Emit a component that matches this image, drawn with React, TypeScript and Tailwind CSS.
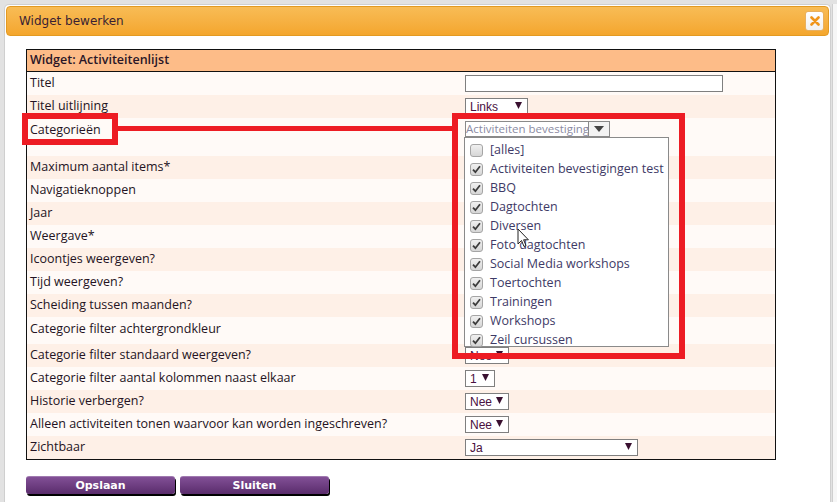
import React from "react";

const labelFont = { fontFamily: '"Open Sans", "DejaVu Sans", sans-serif' };

function Tri({ w, h, color }: { w: number; h: number; color: string }) {
  return (
    <svg width={w} height={h} viewBox={`0 0 ${w} ${h}`}>
      <path d={`M0 0 L${w} 0 L${w / 2} ${h} Z`} fill={color} />
    </svg>
  );
}

function Select({ value, width }: { value: string; width: string }) {
  return (
    <div
      className={`flex h-[17px] items-center justify-between border border-[#7f7f7f] bg-white pl-[4px] pr-[5px] text-[12px] text-[#4a1040] ${width}`}
      style={{ fontFamily: '"Liberation Sans", Arial, sans-serif' }}
    >
      <span className="leading-none">{value}</span>
      <span className="-mt-[3px]">
        <Tri w={7} h={7} color="#3a1030" />
      </span>
    </div>
  );
}

function Check({ checked }: { checked: boolean }) {
  return (
    <div className="flex h-[13px] w-[13px] items-center justify-center rounded-[3px] border border-[#a5a5a5] bg-gradient-to-b from-[#f0f0f0] to-[#d6d6d6]">
      {checked && (
        <svg width="9" height="9" viewBox="0 0 9 9">
          <path d="M1 4.6 L3.4 7.2 L8 1.2" fill="none" stroke="#3c3c3c" strokeWidth="1.8" />
        </svg>
      )}
    </div>
  );
}

type Row = { label: string; h: string; value?: React.ReactNode; top?: boolean };

const rows: Row[] = [
  {
    label: "Titel",
    h: "h-[23px]",
    value: <div className="h-[17px] w-[258px] border border-[#7f7f7f] bg-white" />,
  },
  { label: "Titel uitlijning", h: "h-[23px]", value: <Select value="Links" width="w-[63px]" /> },
  {
    label: "Categorieën",
    h: "h-[38px]",
    top: true,
    value: (
      <div className="mt-[3px] flex h-[16px] w-[145px]">
        <div className="flex min-w-0 flex-1 items-center overflow-hidden whitespace-nowrap border border-[#8a8a8a] bg-white text-[11.5px] leading-none text-[#8b8ba3]" style={labelFont}>
          Activiteiten bevestiging
        </div>
        <div className="flex w-[21px] items-center justify-center border border-l-0 border-[#8a8a8a] bg-[#f3f3f3]">
          <Tri w={10} h={6} color="#444" />
        </div>
      </div>
    ),
  },
  { label: "Maximum aantal items*", h: "h-[23px]" },
  { label: "Navigatieknoppen", h: "h-[23px]" },
  { label: "Jaar", h: "h-[23px]" },
  { label: "Weergave*", h: "h-[23px]" },
  { label: "Icoontjes weergeven?", h: "h-[23px]" },
  { label: "Tijd weergeven?", h: "h-[23px]" },
  { label: "Scheiding tussen maanden?", h: "h-[23px]" },
  { label: "Categorie filter achtergrondkleur", h: "h-[27px]", top: true },
  { label: "Categorie filter standaard weergeven?", h: "h-[23px]", value: <Select value="Nee" width="w-[44px]" /> },
  { label: "Categorie filter aantal kolommen naast elkaar", h: "h-[23px]", value: <Select value="1" width="w-[30px]" /> },
  { label: "Historie verbergen?", h: "h-[23px]", value: <Select value="Nee" width="w-[44px]" /> },
  { label: "Alleen activiteiten tonen waarvoor kan worden ingeschreven?", h: "h-[23px]", value: <Select value="Nee" width="w-[44px]" /> },
  { label: "Zichtbaar", h: "h-[23px]", value: <Select value="Ja" width="w-[173px]" /> },
];

const categories = [
  { name: "[alles]", checked: false },
  { name: "Activiteiten bevestigingen test", checked: true },
  { name: "BBQ", checked: true },
  { name: "Dagtochten", checked: true },
  { name: "Diversen", checked: true },
  { name: "Foto dagtochten", checked: true },
  { name: "Social Media workshops", checked: true },
  { name: "Toertochten", checked: true },
  { name: "Trainingen", checked: true },
  { name: "Workshops", checked: true },
  { name: "Zeil cursussen", checked: true },
];

export default function App() {
  return (
    <div className="relative flex h-[502px] w-[837px] overflow-hidden bg-[#e2e2e2] pl-[4px] pt-[4px]">
      {/* dialoog */}
      <div className="flex w-[827px] flex-col rounded-t-[5px] border border-b-0 border-[#cfcfcf] bg-white p-[1px]">
        <div className="flex h-[30px] items-center justify-between rounded-[4px] border border-[#e39a22] bg-gradient-to-b from-[#f8bc55] to-[#f4a62c] pl-[12px] pr-[4px]">
          <span className="text-[12px] text-[#3a1f33]" style={{ fontFamily: '"DejaVu Sans", sans-serif' }}>
            Widget bewerken
          </span>
          <div className="flex h-[20px] w-[19px] items-center justify-center rounded-[3px] border border-[#e8b060] bg-gradient-to-b from-white to-[#f1f1f1]">
            <svg width="10" height="10" viewBox="0 0 10 10">
              <path d="M1.5 1.5 L8.5 8.5 M8.5 1.5 L1.5 8.5" stroke="#f0951a" strokeWidth="2.6" strokeLinecap="round" />
            </svg>
          </div>
        </div>

        <div className="pl-[20px] pt-[13px]">
          <div className="w-[750px] border border-[#111]" style={labelFont}>
            <div className="flex h-[22px] items-center border-b border-[#111] bg-[#fdbc88] pl-[3px] text-[12.5px] font-semibold text-[#2a1627]">
              Widget: Activiteitenlijst
            </div>
            {rows.map((r, i) => (
              <div
                key={r.label}
                className={`flex ${r.h} ${r.top ? "items-start" : "items-center"} ${i % 2 === 0 ? "bg-[#fffaf7]" : "bg-[#fef0e7]"}`}
              >
                <div className={`w-[438px] pl-[3px] text-[12.5px] font-medium text-[#241323] ${r.top ? "pt-[3px]" : ""}`}>{r.label}</div>
                <div>{r.value}</div>
              </div>
            ))}
          </div>

          <div className="mt-[16px] flex gap-[5px]">
            {["Opslaan", "Sluiten"].map((b) => (
              <button
                key={b}
                className="h-[18px] w-[149px] rounded-[3px] border-t border-[#a07ab0] bg-gradient-to-b from-[#825096] to-[#5a2c6c] text-[11px] font-bold leading-none text-white shadow-[1px_2px_0_#000]"
                style={{ fontFamily: '"DejaVu Sans", Verdana, sans-serif' }}
              >
                {b}
              </button>
            ))}
          </div>
        </div>
      </div>
      <div className="ml-[1px] w-[5px] border-l border-[#cfcfcf] bg-[#f6f6f6]" />

      {/* open keuzelijst categorieën */}
      <div className="absolute left-[464px] top-[137px] h-[210px] w-[205px] border border-[#8a8a8a] bg-white pl-[5px] pt-[3px]" style={labelFont}>
        {categories.map((c) => (
          <div key={c.name} className="flex h-[19px] items-center gap-[7px]">
            <Check checked={c.checked} />
            <span className="whitespace-nowrap text-[12.5px] text-[#3e3a66]">{c.name}</span>
          </div>
        ))}
      </div>

      {/* muiscursor */}
      <svg className="absolute left-[517px] top-[228px]" width="12" height="20" viewBox="0 0 12 20">
        <path d="M1 1 L1 16 L4.5 12.5 L7 18.5 L9 17.6 L6.6 11.8 L11.4 11.8 Z" fill="white" stroke="#222" strokeWidth="1" />
      </svg>

      {/* rode markeringen */}
      <div className="absolute left-[22px] top-[113px] h-[32px] w-[96px] border-[6px] border-[#ed1c24]" />
      <div className="absolute left-[117px] top-[126px] h-[5px] w-[336px] bg-[#ed1c24]" />
      <div className="absolute left-[452px] top-[113px] h-[246px] w-[233px] border-[6px] border-[#ed1c24]" />
    </div>
  );
}
